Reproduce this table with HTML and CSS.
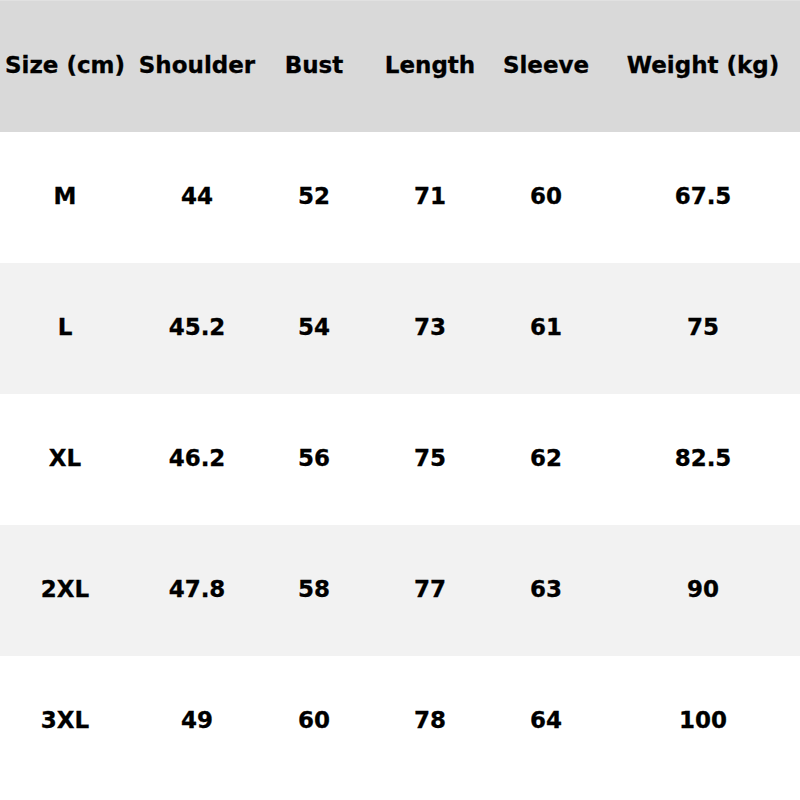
FILE: index.html
```html
<!DOCTYPE html>
<html>
<head>
<meta charset="utf-8">
<link rel="stylesheet" href="styles.css">
</head>
<body>
<div class="chart">
  <div class="row head">
    <div class="cell">Size (cm)</div>
    <div class="cell">Shoulder</div>
    <div class="cell">Bust</div>
    <div class="cell">Length</div>
    <div class="cell">Sleeve</div>
    <div class="cell">Weight (kg)</div>
  </div>
  <div class="row">
    <div class="cell">M</div><div class="cell">44</div><div class="cell">52</div><div class="cell">71</div><div class="cell">60</div><div class="cell">67.5</div>
  </div>
  <div class="row alt">
    <div class="cell">L</div><div class="cell">45.2</div><div class="cell">54</div><div class="cell">73</div><div class="cell">61</div><div class="cell">75</div>
  </div>
  <div class="row">
    <div class="cell">XL</div><div class="cell">46.2</div><div class="cell">56</div><div class="cell">75</div><div class="cell">62</div><div class="cell">82.5</div>
  </div>
  <div class="row alt">
    <div class="cell">2XL</div><div class="cell">47.8</div><div class="cell">58</div><div class="cell">77</div><div class="cell">63</div><div class="cell">90</div>
  </div>
  <div class="row last">
    <div class="cell">3XL</div><div class="cell">49</div><div class="cell">60</div><div class="cell">78</div><div class="cell">64</div><div class="cell">100</div>
  </div>
</div>
</body>
</html>
```
FILE: styles.css
```css
html, body {
  margin: 0;
  padding: 0;
  background: #ffffff;
}
body {
  font-family: "DejaVu Sans", "Open Sans", sans-serif;
  font-weight: 700;
  font-size: 23px;
  color: #000000;
}
.chart {
  width: 800px;
  height: 800px;
  display: flex;
  flex-direction: column;
}
.row {
  display: grid;
  grid-template-columns: 130px 134px 100px 132px 100px 204px;
  height: 131px;
  background: #ffffff;
}
.row.head {
  height: 131px;
  background: #d9d9d9;
  border-top: 1px solid #e1e1e1;
}
.row.alt {
  background: #f2f2f2;
}
.row.last {
  flex: 1;
  align-items: start;
}
.row.last .cell {
  height: 131px;
}
.cell {
  display: flex;
  align-items: center;
  justify-content: center;
  white-space: nowrap;
  padding-bottom: 4px;
  box-sizing: border-box;
  -webkit-text-stroke: 0.3px #000;
}
.cell:last-child {
  padding-left: 10px;
}
```
